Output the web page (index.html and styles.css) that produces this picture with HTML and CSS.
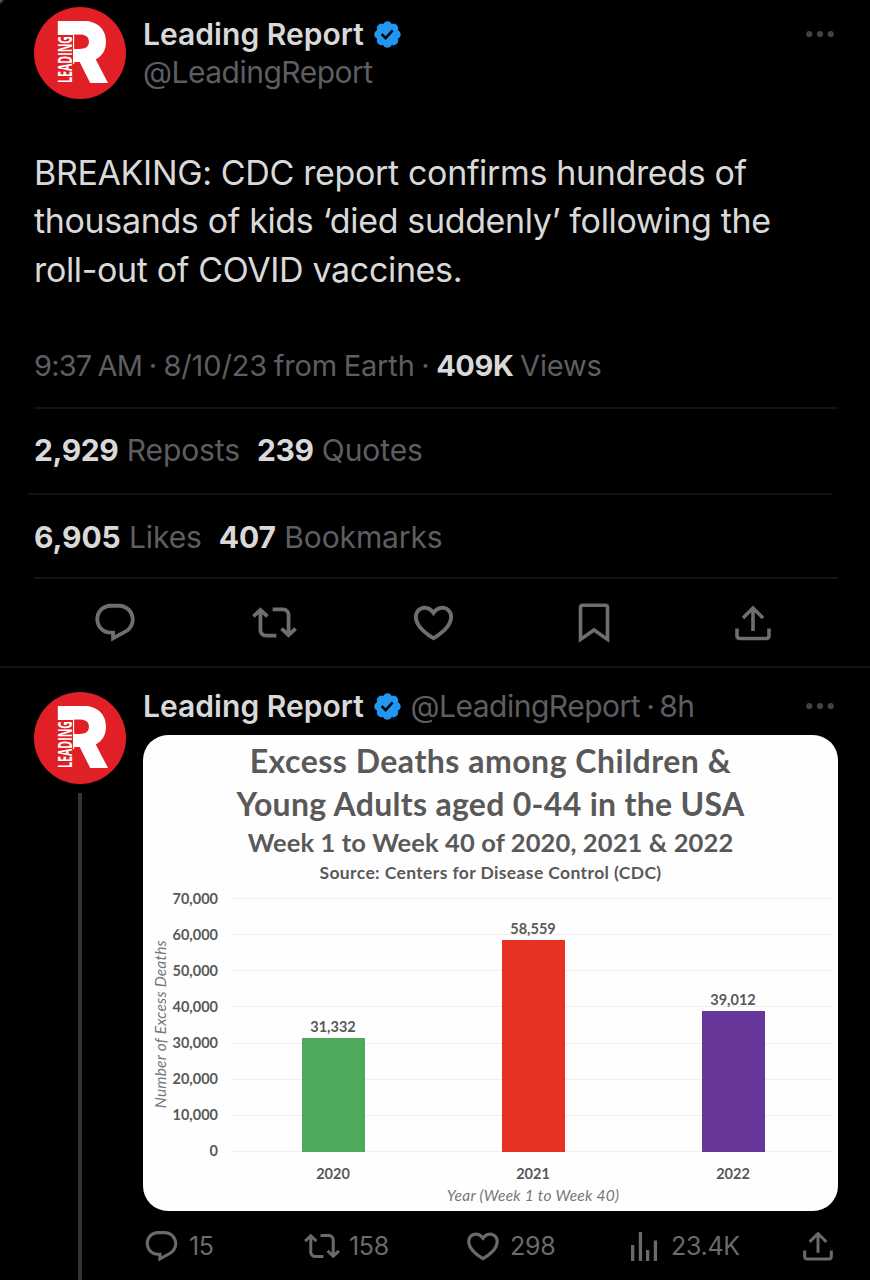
FILE: index.html
```html
<!DOCTYPE html>
<html lang="en">
<head>
    <meta charset="UTF-8">
    <meta name="viewport" content="width=device-width, initial-scale=1.0">
    <title>Leading Report</title>
    <link rel="stylesheet" href="styles.css">
</head>
<body>
    <!-- Shared icons -->
    <svg class="sprite" width="0" height="0">
        <symbol id="logo" viewBox="0 0 92 92">
            <circle cx="46" cy="46" r="46" fill="#e01f26"/>
            <text class="logo-r" x="20" y="75.5" textLength="55" lengthAdjust="spacingAndGlyphs">R</text>
            <rect x="20" y="28" width="19" height="49" fill="#e01f26"/>
            <rect x="38" y="57" width="4" height="20" fill="#e01f26"/>
            <text class="logo-word" transform="translate(38 76) rotate(-90)" textLength="47" lengthAdjust="spacingAndGlyphs">LEADING</text>
        </symbol>
        <symbol id="verified" viewBox="0 0 24 24">
            <path d="M22.25 12c0-1.43-.88-2.67-2.19-3.34.46-1.39.2-2.9-.81-3.91s-2.52-1.27-3.91-.81c-.66-1.31-1.91-2.19-3.34-2.19s-2.67.88-3.33 2.19c-1.4-.46-2.91-.2-3.92.81s-1.26 2.52-.8 3.91c-1.31.67-2.2 1.91-2.2 3.34s.89 2.67 2.2 3.34c-.46 1.39-.21 2.9.8 3.91s2.52 1.26 3.91.81c.67 1.31 1.91 2.19 3.34 2.19s2.68-.88 3.34-2.19c1.39.45 2.9.2 3.91-.81s1.27-2.52.81-3.91c1.31-.67 2.19-1.91 2.19-3.34zm-11.71 4.2L6.8 12.46l1.41-1.42 2.26 2.26 4.8-5.23 1.47 1.36-6.2 6.77z"/>
        </symbol>
        <symbol id="dots" viewBox="0 0 28 8">
            <circle cx="3.3" cy="4" r="3.1"/>
            <circle cx="14" cy="4" r="3.1"/>
            <circle cx="24.7" cy="4" r="3.1"/>
        </symbol>
        <symbol id="reply" viewBox="0 0 24 24">
            <path d="M1.751 10c0-4.42 3.584-8 8.005-8h4.366c4.49 0 8.129 3.64 8.129 8.13 0 2.96-1.607 5.68-4.196 7.11l-8.054 4.46v-3.69h-.067c-4.49.1-8.183-3.51-8.183-8.01zm8.005-6c-3.317 0-6.005 2.69-6.005 6 0 3.37 2.77 6.08 6.138 6.01l.351-.01h1.761v2.3l5.087-2.81c1.951-1.08 3.163-3.13 3.163-5.36 0-3.39-2.744-6.13-6.129-6.13H9.756z"/>
        </symbol>
        <symbol id="repost" viewBox="0 0 24 24">
            <path d="M4.5 3.88l4.432 4.14-1.364 1.46L5.5 7.55V16c0 1.1.896 2 2 2H13v2H7.5c-2.209 0-4-1.79-4-4V7.55L1.432 9.48.068 8.02 4.5 3.88zM16.5 6H11V4h5.5c2.209 0 4 1.79 4 4v8.45l2.068-1.93 1.364 1.46-4.432 4.14-4.432-4.14 1.364-1.46 2.068 1.93V8c0-1.1-.896-2-2-2z"/>
        </symbol>
        <symbol id="like" viewBox="0 0 24 24">
            <path d="M16.697 5.5c-1.222-.06-2.679.51-3.89 2.16l-.805 1.09-.806-1.09C9.984 6.01 8.526 5.44 7.304 5.5c-1.243.07-2.349.78-2.91 1.91-.552 1.12-.633 2.78.479 4.82 1.074 1.97 3.257 4.27 7.129 6.61 3.87-2.34 6.052-4.64 7.126-6.61 1.111-2.04 1.03-3.7.477-4.82-.561-1.13-1.666-1.84-2.908-1.91zm4.187 7.69c-1.351 2.48-4.001 5.12-8.379 7.67l-.503.3-.504-.3c-4.379-2.55-7.029-5.19-8.382-7.67-1.36-2.5-1.41-4.86-.514-6.67.887-1.79 2.647-2.91 4.601-3.01 1.651-.09 3.368.56 4.798 2.01 1.429-1.45 3.146-2.1 4.796-2.01 1.954.1 3.714 1.22 4.601 3.01.896 1.81.846 4.17-.514 6.67z"/>
        </symbol>
        <symbol id="bookmark" viewBox="0 0 32 40">
            <path class="line" d="M2.5 36.4V4.5Q2.5 2.3 4.7 2.3H27.3Q29.5 2.3 29.5 4.5V36.4L16 27Z"/>
        </symbol>
        <symbol id="share" viewBox="0 0 36 36">
            <path class="line" d="M18 26V3M8 13L18 3L28 13M2 23.5V30.5Q2 33.5 5 33.5H31Q34 33.5 34 30.5V23.5"/>
        </symbol>
        <symbol id="views" viewBox="0 0 27 29">
            <path d="M0 13h3.3v16H0zM7.8 0h3.3v29H7.8zM15 18h3.3v11H15zM22.8 8.5h3.3V29h-3.3z"/>
        </symbol>
    </svg>

    <!-- Main post -->
    <article class="post">
        <header class="post-header">
            <svg class="avatar"><use href="#logo"/></svg>
            <div class="author">
                <div class="author-line">
                    <span class="name">Leading Report</span>
                    <svg class="verified"><use href="#verified"/></svg>
                </div>
                <div class="handle">@LeadingReport</div>
            </div>
            <svg class="more"><use href="#dots"/></svg>
        </header>

        <p class="post-text">
            BREAKING: CDC report confirms hundreds of<br>
            thousands of kids ‘died suddenly’ following the<br>
            roll-out of COVID vaccines.
        </p>

        <div class="meta"><span class="time">9:37 AM</span> · 8/10/23 from Earth · <b>409K</b> Views</div>
        <div class="stats stats-reposts">
            <span><b>2,929</b> Reposts</span>
            <span><b>239</b> Quotes</span>
        </div>
        <div class="stats stats-likes">
            <span><b>6,905</b> Likes</span>
            <span><b>407</b> Bookmarks</span>
        </div>

        <div class="actions">
            <svg class="i-reply"><use href="#reply"/></svg>
            <svg class="i-repost"><use href="#repost"/></svg>
            <svg class="i-like"><use href="#like"/></svg>
            <svg class="i-bookmark"><use href="#bookmark"/></svg>
            <svg class="i-share"><use href="#share"/></svg>
        </div>
    </article>

    <!-- Thread reply -->
    <article class="reply">
        <div class="rail">
            <svg class="avatar"><use href="#logo"/></svg>
            <div class="thread-line"></div>
        </div>
        <div class="reply-body">
            <header class="reply-header">
                <span class="name">Leading Report</span>
                <svg class="verified"><use href="#verified"/></svg>
                <span class="handle">@LeadingReport</span>
                <span class="ago">· 8h</span>
                <svg class="more"><use href="#dots"/></svg>
            </header>

            <div class="chart-card">
                <div class="title t1">Excess Deaths among Children &amp;</div>
                <div class="title t2">Young Adults aged 0-44 in the USA</div>
                <div class="title t3">Week 1 to Week 40 of 2020, 2021 &amp; 2022</div>
                <div class="title t4">Source: Centers for Disease Control (CDC)</div>

                <div class="chart">
                    <div class="y-title"><span>Number of Excess Deaths</span></div>
                    <div class="y-axis">
                        <span>70,000</span>
                        <span>60,000</span>
                        <span>50,000</span>
                        <span>40,000</span>
                        <span>30,000</span>
                        <span>20,000</span>
                        <span>10,000</span>
                        <span>0</span>
                    </div>
                    <div class="plot">
                        <div class="col"><span>31,332</span><div class="bar green" style="height: 113.3px"></div></div>
                        <div class="col"><span>58,559</span><div class="bar red" style="height: 212px"></div></div>
                        <div class="col"><span>39,012</span><div class="bar purple" style="height: 141px"></div></div>
                    </div>
                </div>
                <div class="x-axis">
                    <span>2020</span>
                    <span>2021</span>
                    <span>2022</span>
                </div>
                <div class="x-title">Year (Week 1 to Week 40)</div>
            </div>

            <div class="counts">
                <div class="c-reply"><svg><use href="#reply"/></svg>15</div>
                <div class="c-repost"><svg><use href="#repost"/></svg>158</div>
                <div class="c-like"><svg><use href="#like"/></svg>298</div>
                <div class="c-views"><svg><use href="#views"/></svg>23.4K</div>
                <div class="c-share"><svg><use href="#share"/></svg></div>
            </div>
        </div>
    </article>
</body>
</html>
```
FILE: styles.css
```css
* {
    box-sizing: border-box;
    margin: 0;
    padding: 0;
}

body {
    width: 870px;
    height: 1280px;
    overflow: hidden;
    background: linear-gradient(135deg, #777 0, #000 4px);
    color: #d9d9d9;
    font-family: Inter, sans-serif;
    font-size: 29px;
}

svg {
    display: block;
    flex: none;
    fill: currentColor;
}

svg,
symbol {
    overflow: visible;
}

.sprite {
    position: absolute;
}

.line {
    fill: none;
    stroke: currentColor;
    stroke-width: 3.6;
}

.logo-r {
    fill: #fff;
    font: 900 85px Inter, sans-serif;
}

.logo-word {
    fill: #fff;
    font: 700 20px "Open Sans", sans-serif;
}

.avatar {
    width: 92px;
    height: 92px;
}

.name {
    font-size: 30px;
    font-weight: 600;
    letter-spacing: 0.04px;
    white-space: nowrap;
}

.verified {
    width: 31px;
    height: 31px;
    color: #2196f3;
}

.handle,
.ago {
    color: #5d5e61;
    font-size: 30px;
    letter-spacing: -0.5px;
    white-space: nowrap;
}

.more {
    width: 28px;
    height: 8px;
    margin-left: auto;
    color: #434345;
}

/* Main post */
.post {
    border-bottom: 2px solid #141416;
}

.post-header {
    display: flex;
    height: 149px;
    padding: 6.5px 36px 0 34px;
}

.post-header .more {
    margin-top: 23px;
}

.author {
    margin: 8.5px 0 0 17px;
    line-height: 38px;
}

.author-line {
    display: flex;
    align-items: center;
    gap: 7.5px;
    height: 38px;
}

.post-text {
    height: 145px;
    padding-left: 34px;
    font-size: 34px;
    letter-spacing: -0.35px;
    line-height: 48.3px;
    white-space: nowrap;
}

.meta,
.stats {
    margin: 0 32px 0 34px;
    color: #5d5e61;
    border-bottom: 2px solid #141416;
    white-space: nowrap;
}

.meta b,
.stats b {
    color: #d9d9d9;
    font-weight: 700;
    letter-spacing: -0.4px;
}

.meta {
    height: 115px;
    padding-top: 47px;
    line-height: 49px;
    letter-spacing: -0.14px;
    word-spacing: -1.4px;
}

.meta .time {
    letter-spacing: -0.8px;
}

.stats {
    display: flex;
    gap: 17px;
    font-size: 30px;
    letter-spacing: -0.1px;
}

.stats-reposts {
    height: 86px;
    margin: 0 38px 0 28px;
    padding-left: 6px;
    line-height: 83px;
}

.stats-likes {
    height: 84px;
    line-height: 85px;
}

.stats-likes b {
    letter-spacing: -0.1px;
}

.actions {
    display: grid;
    grid-template-columns: repeat(5, 159.6px);
    justify-items: center;
    align-items: center;
    height: 87px;
    padding-left: 35px;
    color: #6e6e70;
}

.i-reply {
    width: 46px;
    height: 46px;
}

.i-repost {
    width: 45px;
    height: 45px;
}

.i-like {
    width: 47px;
    height: 47px;
}

.i-bookmark {
    width: 32px;
    height: 40px;
}

.i-share {
    width: 36px;
    height: 36px;
}

/* Thread reply */
.reply {
    display: flex;
    gap: 17px;
    height: 612px;
    padding-left: 34px;
}

.rail {
    display: flex;
    flex-direction: column;
    align-items: center;
    gap: 8.5px;
    width: 92px;
    padding-top: 24px;
}

.thread-line {
    flex: 1;
    width: 4px;
    background: #343437;
}

.reply-body {
    width: 695px;
}

.reply-header {
    display: flex;
    align-items: center;
    height: 67px;
    padding: 19px 4px 10px 0;
}

.reply-header .verified {
    margin: 0 8px 0 7.5px;
}

.reply-header .ago {
    margin-left: 6px;
    word-spacing: -3px;
}

.chart-card {
    height: 476px;
    padding-top: 3px;
    background: #fefefe;
    border-radius: 25px;
    color: #595959;
    font-family: Lato, sans-serif;
    overflow: hidden;
}

.title {
    font-weight: 700;
    text-align: center;
    white-space: nowrap;
}

.t1 {
    height: 44px;
    font-size: 32px;
    letter-spacing: 0.5px;
    line-height: 45px;
}

.t2 {
    height: 43px;
    font-size: 32px;
    letter-spacing: 0.3px;
    line-height: 44px;
}

.t3 {
    height: 34px;
    font-size: 25.5px;
    letter-spacing: 0.12px;
    line-height: 35px;
}

.t4 {
    height: 26px;
    font-size: 17.5px;
    letter-spacing: 0.38px;
    line-height: 27px;
}

.chart {
    display: flex;
    height: 266.5px;
    padding-top: 12.5px;
}

.y-title {
    display: flex;
    align-items: center;
    justify-content: center;
    width: 34px;
    color: #777;
    font-size: 15.5px;
    font-style: italic;
    letter-spacing: 0.2px;
}

.y-title span {
    writing-mode: vertical-rl;
    transform: rotate(180deg);
    white-space: nowrap;
}

.y-axis {
    display: flex;
    flex-direction: column;
    width: 41px;
    margin-top: -17px;
    font-size: 14.5px;
    font-weight: 700;
    line-height: 36.14px;
    text-align: right;
}

/* labels are a bit wider than the axis column */
.y-axis span {
    margin: 0 0 0 -10px;
}

.plot {
    display: grid;
    grid-template-columns: repeat(3, 200px);
    width: 600px;
    height: 254px;
    margin-left: 15px;
    background: repeating-linear-gradient(#efefef 0, #efefef 1px, transparent 1px, transparent 36.14px);
}

.col {
    display: flex;
    flex-direction: column;
    align-items: center;
    justify-content: flex-end;
    font-size: 14.5px;
    font-weight: 700;
    line-height: 23px;
}

.bar {
    width: 63px;
}

.green {
    background: #4eaa5b;
}

.red {
    background: #e83223;
}

.purple {
    background: #673699;
}

.x-axis {
    display: grid;
    grid-template-columns: repeat(3, 200px);
    height: 31px;
    padding: 12px 0 0 90px;
    font-size: 14.5px;
    font-weight: 700;
    line-height: 20px;
    text-align: center;
}

.x-title {
    padding-left: 85px;
    color: #777;
    font-size: 15.5px;
    font-style: italic;
    letter-spacing: 0.25px;
    line-height: 24px;
    text-align: center;
}

.counts {
    display: grid;
    grid-template-columns: 161px 160px 166px 173px 1fr;
    align-items: center;
    height: 70px;
    color: #6a6a6c;
    font-size: 25px;
    letter-spacing: -0.3px;
}

.counts div {
    display: flex;
    align-items: center;
    gap: 9px;
}

.c-reply svg {
    width: 37px;
    height: 37px;
}

.c-repost svg {
    width: 36px;
    height: 36px;
}

.c-like svg {
    width: 38px;
    height: 38px;
    margin-right: -1px;
}

.c-views svg {
    width: 27px;
    height: 29px;
    margin: 0 4px 0 1px;
}

.c-share svg {
    width: 30px;
    height: 30px;
}
```
